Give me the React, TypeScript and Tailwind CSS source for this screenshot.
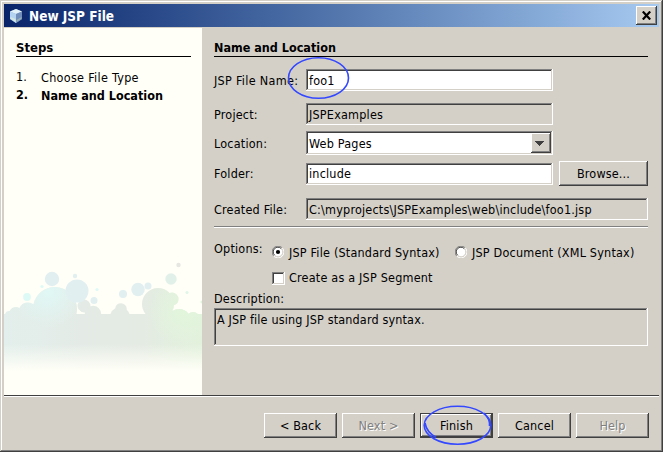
import React from "react";

const SUNKEN =
  "shadow-[inset_-1px_-1px_#ffffff,inset_1px_1px_#808080,inset_-2px_-2px_#d4d0c8,inset_2px_2px_#404040]";
const RAISED =
  "shadow-[inset_-1px_-1px_#404040,inset_1px_1px_#ffffff,inset_-2px_-2px_#808080]";

function Label({ children, className = "" }: { children: React.ReactNode; className?: string }) {
  return <div className={`w-[92px] shrink-0 pt-px ${className}`}>{children}</div>;
}

function Field({ children, className = "" }: { children: React.ReactNode; className?: string }) {
  return <div className={`flex h-[22px] items-center pt-px pl-[3px] ${SUNKEN} ${className}`}>{children}</div>;
}

function Button({ children, className = "w-[73px]" }: { children: React.ReactNode; className?: string }) {
  return (
    <button className={`flex h-[25px] items-center justify-center tracking-[0.15px] ${RAISED} ${className}`}>
      {children}
    </button>
  );
}

function Radio({ checked = false }: { checked?: boolean }) {
  return (
    <svg width="12" height="12" viewBox="0 0 12 12" className="shrink-0">
      <circle cx="6" cy="6" r="5" fill="#fff" />
      <path d="M1.8 10.2A5.5 5.5 0 0 1 10.2 1.8" fill="none" stroke="#808080" />
      <path d="M2.6 9.2A4.6 4.6 0 0 1 9.2 2.6" fill="none" stroke="#404040" />
      <path d="M10.2 1.8A5.5 5.5 0 0 1 1.8 10.2" fill="none" stroke="#fff" />
      <path d="M9.4 2.8A4.6 4.6 0 0 1 2.8 9.4" fill="none" stroke="#d4d0c8" />
      {checked && <circle cx="6" cy="6" r="2.1" fill="#000" />}
    </svg>
  );
}

function Cube() {
  return (
    <svg width="14" height="16" viewBox="0 0 14 16">
      <path d="M7 1 13 3.5V11L7 15 1 11V3.5z" fill="#8fb0d8" />
      <path d="M7 1 13 3.5 7 6 1 3.5z" fill="#e2f0f8" />
      <path d="M1 3.5 7 6V15L1 11z" fill="#b4d3f0" />
      <path d="M7 6 13 3.5V11L7 15z" fill="#708eb9" />
      <path d="M1.5 9 6.5 11V14L1.5 10.8z" fill="#d5e8df" />
      <path d="M7.5 12 12.5 9V10.8L7.5 14z" fill="#96b0b7" />
    </svg>
  );
}

function Bubbles() {
  return (
    <svg className="mt-auto block" width="198" height="145" viewBox="4 250 198 145">
      <defs>
        <linearGradient id="tone" gradientUnits="userSpaceOnUse" x1="4" y1="0" x2="202" y2="0">
          <stop offset="0" stopColor="#e3efec" />
          <stop offset="0.4" stopColor="#e4ebe6" />
          <stop offset="0.7" stopColor="#e4ebe3" />
          <stop offset="1" stopColor="#e2f1dc" />
        </linearGradient>
        <linearGradient id="fade" x1="0" y1="0" x2="0" y2="1">
          <stop offset="0" stopColor="#fffff7" stopOpacity="0" />
          <stop offset="1" stopColor="#fffff7" />
        </linearGradient>
        <radialGradient id="cyan" gradientUnits="userSpaceOnUse" cx="48" cy="292" r="36">
          <stop offset="0" stopColor="#e0f8f5" />
          <stop offset="1" stopColor="#e0f8f5" stopOpacity="0" />
        </radialGradient>
        <radialGradient id="green" gradientUnits="userSpaceOnUse" cx="183" cy="312" r="34">
          <stop offset="0" stopColor="#e2f6dc" />
          <stop offset="1" stopColor="#e2f6dc" stopOpacity="0" />
        </radialGradient>
        <clipPath id="hills">
          <circle cx="9" cy="315" r="4" />
          <circle cx="16" cy="314" r="7" />
          <circle cx="28" cy="312" r="9.5" />
          <circle cx="55" cy="309" r="22" />
          <circle cx="84" cy="306" r="6.5" />
          <circle cx="93" cy="314" r="8.2" />
          <circle cx="120" cy="317" r="10" />
          <circle cx="121" cy="309" r="5.8" />
          <circle cx="158" cy="304" r="16" />
          <circle cx="172" cy="299" r="6.5" />
          <circle cx="179" cy="321" r="12" />
          <circle cx="193" cy="319" r="7" />
          <rect x="4" y="314" width="198" height="60" />
        </clipPath>
      </defs>
      <g clipPath="url(#hills)">
        <rect x="4" y="280" width="198" height="94" fill="url(#tone)" />
        <rect x="4" y="280" width="198" height="94" fill="url(#cyan)" />
        <rect x="4" y="280" width="198" height="94" fill="url(#green)" />
      </g>
      <path d="M79 309.5 81 312 83.500 313V314H79z" fill="#fffff7" />
      <rect x="4" y="344" width="198" height="27" fill="url(#fade)" />
      <rect x="4" y="371" width="198" height="24" fill="#fffff7" />
      <g fill="#e1eff1">
        <circle cx="52" cy="279" r="7.2" />
        <circle cx="75" cy="276" r="2.2" />
        <circle cx="77" cy="291" r="11.5" />
        <circle cx="94" cy="300.5" r="3.5" />
        <circle cx="123" cy="294" r="4" />
        <circle cx="138" cy="289.5" r="6.7" />
        <circle cx="148" cy="286" r="3.5" />
      </g>
      <circle cx="27" cy="297" r="3.9" fill="#defaf6" />
      <circle cx="42" cy="286.5" r="1.6" fill="#defaf6" />
      <circle cx="97" cy="289.5" r="1.6" fill="#defaf6" />
      <circle cx="171" cy="279" r="5.7" fill="#e1f1e9" />
      <circle cx="178.5" cy="265" r="2.2" fill="#e6e7e3" />
      <circle cx="187" cy="292.5" r="1.5" fill="#e0f6e8" />
      <circle cx="202" cy="302" r="1.5" fill="#e0f6dc" />
    </svg>
  );
}

export default function App() {
  return (
    <div className="relative flex h-[452px] w-[663px] flex-col bg-[#d4d0c8] pt-1 pr-1 pl-1 font-['DejaVu_Sans_Condensed','DejaVu_Sans',sans-serif] text-[12.5px] leading-4 tracking-[0.2px] whitespace-pre text-black shadow-[inset_-1px_-1px_#404040,inset_1px_1px_#d4d0c8,inset_-2px_-2px_#808080,inset_2px_2px_#ffffff]">
      <header className="flex h-[23px] shrink-0 items-center bg-linear-to-r from-[#0a246a] to-[#a6caf0] pr-[2px] pl-[5px]">
        <Cube />
        <span className="ml-[6px] text-[13.5px] font-bold tracking-normal text-white">New JSP File</span>
        <button className={`ml-auto flex h-[19px] w-[21px] items-center justify-center bg-[#d4d0c8] ${RAISED}`}>
          <svg width="9" height="9" viewBox="0 0 9 9">
            <path d="M0.8 0.5 8.2 8.5M8.2 0.5 0.8 8.5" stroke="#000" strokeWidth="2.2" />
          </svg>
        </button>
      </header>

      <div className="mt-px flex h-[367px] shrink-0">
        <aside className="flex w-[198px] shrink-0 flex-col bg-[#fffff7]">
          <h2 className="mr-[11px] ml-3 h-[29px] border-b border-black pt-[12px] text-[13px] font-bold tracking-normal">
            Steps
          </h2>
          <ol className="mt-[12px] ml-3">
            <li className="flex h-[18px]">
              <span className="w-[25px]">1.</span>
              <span className="pt-px tracking-[0.3px]">Choose File Type</span>
            </li>
            <li className="flex h-[18px] font-bold tracking-normal">
              <span className="w-[25px]">2.</span>
              <span className="pt-px">Name and Location</span>
            </li>
          </ol>
          <Bubbles />
        </aside>

        <main className="flex grow flex-col pr-[11px] pl-3">
          <h2 className="h-[29px] shrink-0 border-b border-black pt-[12px] font-bold tracking-normal">
            Name and Location
          </h2>
          <div className="mt-3 flex items-center">
            <Label className="tracking-[0.3px]">JSP File Name:</Label>
            <Field className="w-[247px] bg-white">foo1</Field>
          </div>
          <div className="mt-3 flex items-center">
            <Label>Project:</Label>
            <Field className="w-[247px]">JSPExamples</Field>
          </div>
          <div className="mt-[6px] flex items-center">
            <Label>Location:</Label>
            <div className={`flex h-6 w-[247px] items-center justify-between bg-white pr-[2px] pl-[3px] ${SUNKEN}`}>
              <span className="pt-px">Web Pages</span>
              <span className={`flex h-5 w-5 items-center bg-[#d4d0c8] pl-1 ${RAISED}`}>
                <svg width="9" height="5" viewBox="0 0 9 5" shapeRendering="crispEdges">
                  <path d="M0 0h9v1H8v1H7v1H6v1H5v1H4V4H3V3H2V2H1V1H0z" fill="#404040" />
                </svg>
              </span>
            </div>
          </div>
          <div className="mt-[6px] flex items-center">
            <Label className="pt-0">Folder:</Label>
            <div className={`flex h-[22px] w-[247px] items-center bg-white pl-[3px] ${SUNKEN}`}>include</div>
            <Button className="ml-[6px] w-[89px]">Browse...</Button>
          </div>
          <div className="mt-3 flex items-center">
            <Label>Created File:</Label>
            <Field className="grow">C:\myprojects\JSPExamples\web\include\foo1.jsp</Field>
          </div>
          <div className="mt-[6px] h-[2px] shrink-0 border-t border-[#808080] bg-white" />
          <div className="mt-3 flex h-6 items-center">
            <div className="w-[58px] shrink-0 pb-[7px]">Options:</div>
            <Radio checked />
            <span className="ml-[5px] w-[166px] pt-px">JSP File (Standard Syntax)</span>
            <Radio />
            <span className="ml-[5px] pt-px">JSP Document (XML Syntax)</span>
          </div>
          <div className="mt-[6px] ml-[58px] flex h-4 items-center">
            <span className={`h-[13px] w-[13px] bg-white ${SUNKEN}`} />
            <span className="ml-1">Create as a JSP Segment</span>
          </div>
          <div className="mt-[5px]">Description:</div>
          <div className={`mt-px h-[38px] shrink-0 pt-1 pl-[3px] tracking-[0.15px] ${SUNKEN}`}>
            A JSP file using JSP standard syntax.
          </div>
        </main>
      </div>

      <footer className="flex grow border-t border-[#404040] pr-[10px] shadow-[inset_0_1px_#ffffff]">
        <div className="mt-[17px] ml-auto flex gap-[5px]">
          <Button>&lt; Back</Button>
          <Button className="w-[73px] text-[#808080] [text-shadow:1px_1px_#fff]">Next &gt;</Button>
          <div className="h-[25px] w-[73px] border border-[#404040]">
            <button className={`flex h-[23px] w-[71px] items-center justify-center ${RAISED}`}>Finish</button>
          </div>
          <Button>Cancel</Button>
          <Button className="w-[73px] text-[#808080] [text-shadow:1px_1px_#fff]">Help</Button>
        </div>
      </footer>

      <svg
        className="pointer-events-none absolute inset-0"
        width="663"
        height="452"
        viewBox="0 0 663 452"
        fill="none"
        stroke="#3348ff"
        strokeWidth="1.6"
      >
        <ellipse cx="318.5" cy="78" rx="30" ry="20.3" />
        <ellipse cx="457.5" cy="425.3" rx="33.3" ry="19" />
        <path d="M425 423C426 429 430 434 436 437.500M484 413C488 417 490 421 489.500 426" />
      </svg>
    </div>
  );
}
